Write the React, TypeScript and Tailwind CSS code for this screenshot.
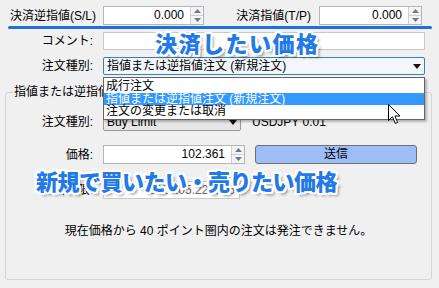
import React from "react";

const ui = "font-['Liberation_Sans','Noto_Sans_CJK_JP',sans-serif]";
const callout =
  "absolute font-['Noto_Sans_CJK_JP',sans-serif] font-black text-[22px] leading-none text-[#2279e8] [text-shadow:-2px_0_0_#fff,2px_0_0_#fff,0_-2px_0_#fff,0_2px_0_#fff,-2px_-2px_0_#fff,2px_2px_0_#fff,-2px_2px_0_#fff,2px_-2px_0_#fff,3px_3px_3px_rgba(0,0,0,0.45)]";

function Spin() {
  return (
    <div className="flex flex-col w-[13px] h-full border-l border-[#d0d0d0] bg-[#f4f4f4]">
      <div className="flex-1 flex items-center justify-center border-b border-[#d0d0d0]">
        <svg width="7" height="4" viewBox="0 0 7 4">
          <path d="M0 4 L3.5 0 L7 4Z" fill="#6b7a90" />
        </svg>
      </div>
      <div className="flex-1 flex items-center justify-center">
        <svg width="7" height="4" viewBox="0 0 7 4">
          <path d="M0 0 L3.5 4 L7 0Z" fill="#6b7a90" />
        </svg>
      </div>
    </div>
  );
}

function NumBox({ value, w }: { value: string; w: string }) {
  return (
    <div className={`flex h-[19px] bg-white border border-[#b5b5b5] ${w}`}>
      <div className="flex-1 text-right pr-[6px] text-[12px] leading-[17px]">{value}</div>
      <Spin />
    </div>
  );
}

function Arrow() {
  return (
    <svg width="8" height="5" viewBox="0 0 8 5">
      <path d="M0 0 L8 0 L4 5Z" fill="#111" />
    </svg>
  );
}

export default function App() {
  return (
    <div className={`relative w-[439px] h-[288px] overflow-hidden bg-[#f0f0f0] text-black ${ui}`}>
      {/* S/L T/P row */}
      <div className="flex items-center mt-[6px] h-[19px]">
        <div className="w-[103px] pl-[10px] text-[12px] whitespace-nowrap">決済逆指値(S/L)</div>
        <NumBox value="0.000" w="w-[101px]" />
        <div className="w-[115px] text-right pr-[8px] text-[12px] whitespace-nowrap">決済指値(T/P)</div>
        <NumBox value="0.000" w="w-[103px]" />
      </div>
      <div className="ml-[8px] mt-[1px] w-[424px] h-[3px] rounded-full bg-[#1f6fe0]" />

      {/* comment */}
      <div className="flex items-center mt-[3px] h-[18px]">
        <div className="w-[103px] pr-[10px] text-right text-[12px]">コメント:</div>
        <div className="w-[322px] h-[18px] bg-white border border-[#c8c8c8]" />
      </div>

      {/* order type */}
      <div className="flex items-center mt-[7px] h-[18px]">
        <div className="w-[103px] pr-[10px] text-right text-[12px]">注文種別:</div>
        <div className="relative w-[322px] h-[18px]">
          <div className="flex items-center h-full px-[3px] border border-[#3c7fb1] bg-[#f2f7fc] rounded-[2px]">
            <span className="flex-1 text-[12px] leading-none">指値または逆指値注文 (新規注文)</span>
            <Arrow />
          </div>
          <div className="absolute z-20 left-0 top-[20px] w-[322px] bg-white border border-[#646464] shadow-[2px_2px_2px_rgba(0,0,0,0.25)] text-[12px] leading-[12.5px] pt-[2px] pb-[1px]">
            <div className="px-[2px]">成行注文</div>
            <div className="px-[2px] bg-[#3399ff] text-white">指値または逆指値注文 (新規注文)</div>
            <div className="px-[2px]">注文の変更または取消</div>
          </div>
        </div>
      </div>

      {/* group box */}
      <div className="relative ml-[5px] mt-[17px] w-[427px] h-[188px] border border-[#d5d5d5] rounded-[3px] pt-[20px]">
        <span className="absolute left-[7px] top-[-8px] px-[1px] bg-[#f0f0f0] text-[12px] leading-[14px] whitespace-nowrap">
          指値または逆指値注文
        </span>

        <div className="flex items-center h-[18px]">
          <div className="w-[97px] pr-[10px] text-right text-[12px]">注文種別:</div>
          <div className="flex items-center w-[138px] h-[18px] px-[3px] border border-[#9a9a9a] bg-[#e6e6e6] rounded-[2px]">
            <span className="flex-1 text-[12px] leading-none">Buy Limit</span>
            <Arrow />
          </div>
          <div className="ml-[11px] text-[12px]">USDJPY 0.01</div>
        </div>

        <div className="flex items-center mt-[14px] h-[19px]">
          <div className="w-[97px] pr-[10px] text-right text-[12px]">価格:</div>
          <NumBox value="102.361" w="w-[142px]" />
          <div className="ml-[10px] w-[162px] h-[19px] border border-[#707070] rounded-[3px] bg-[#9dbdf7] text-center text-[12px] leading-[17px]">
            送信
          </div>
        </div>

        <div className="flex items-center mt-[17px] h-[18px]">
          <div className="w-[97px] pr-[10px] text-right text-[12px]">有効期限:</div>
          <div className="w-[137px] h-[18px] bg-white border border-[#c8c8c8] text-right pr-[4px] text-[12px] leading-[16px] text-[#666]">
            2014.05.22 22:5
          </div>
        </div>

        <div className="mt-[23px] text-center text-[12px]">
          現在価格から 40 ポイント圏内の注文は発注できません。
        </div>
      </div>

      {/* callouts */}
      <div className={`${callout} tracking-[1.5px] left-[155px] top-[31px]`}>決済したい価格</div>
      <div className={`${callout} tracking-[-0.5px] left-[36px] top-[169px]`}>新規で買いたい・売りたい価格</div>

      {/* mouse cursor */}
      <svg className="absolute z-30 left-[388px] top-[104px]" width="13" height="21" viewBox="0 0 13 21">
        <path d="M0.5 0.5 L0.5 16.5 L4.5 12.8 L7.3 19.5 L9.6 18.5 L6.9 12 L12 12 Z" fill="#fff" stroke="#000" strokeWidth="1" strokeLinejoin="round" />
      </svg>
    </div>
  );
}
